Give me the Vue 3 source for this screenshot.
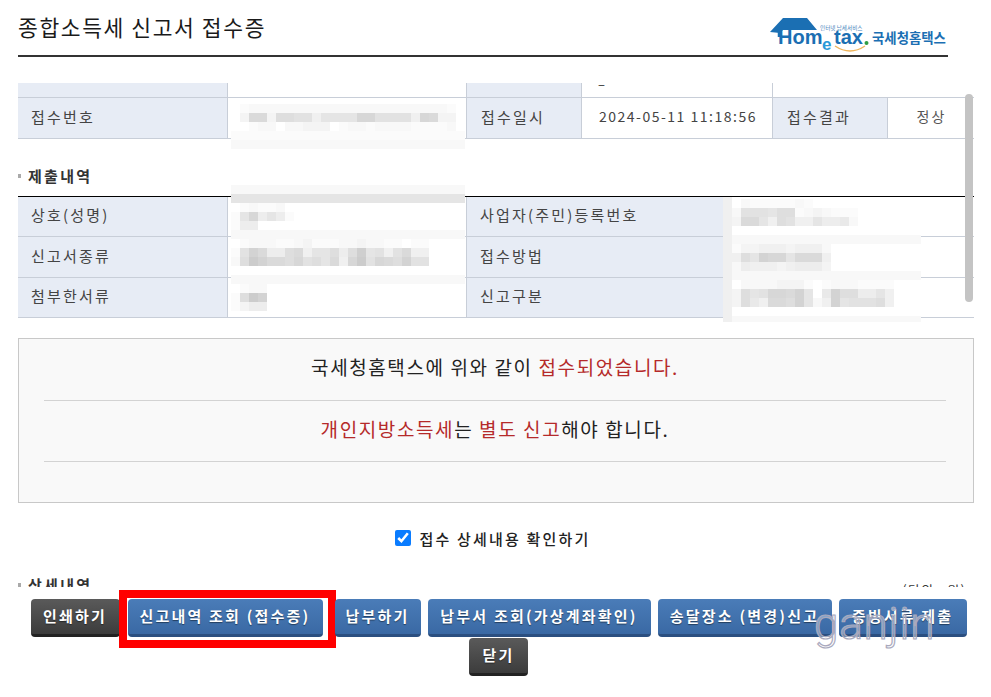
<script setup>
const rows1 = ['접수번호', '접수일시', '2024-05-11 11:18:56', '접수결과', '정상']
const rows2 = [
  { a: '상호(성명)', b: '사업자(주민)등록번호', tall: false },
  { a: '신고서종류', b: '접수방법', tall: true },
  { a: '첨부한서류', b: '신고구분', tall: false }
]
const buttons = [
  { label: '인쇄하기', cls: 'dark w1' },
  { label: '신고내역 조회 (접수증)', cls: 'blue w2 marked' },
  { label: '납부하기', cls: 'blue w3' },
  { label: '납부서 조회(가상계좌확인)', cls: 'blue w4' },
  { label: '송달장소 (변경)신고', cls: 'blue w5' },
  { label: '증빙서류 제출', cls: 'blue w6' },
  { label: '닫기', cls: 'dark w7' }
]
const band = (x, y, w, h, d) => ({ x, y, w, h, r: [d] })
const cells = (x, y, r) => {
  const n = Math.max(...r.map((s) => s.length))
  const rows = r.map((s) => s.padEnd(n, 'f'))
  return { x, y, w: n * 9, h: rows.length * 9, r: rows }
}
const raw = [
  band(231, 131, 234, 9, 'e'),
  band(231, 140, 234, 9, 'd'),
  cells(240, 104, ['edddddddddddddddddddddde', 'c55c6677b88884477 7b45cc'.replace(' ', '7'), 'feddfddcccfeddeddddeeeed']),
  band(231, 185, 234, 9, 'd'),
  band(231, 194, 234, 9, '8'),
  cells(231, 203, ['fedeed', 'e84a8ae', 'eaa']),
  band(231, 230, 234, 9, 'd'),
  cells(231, 239, ['fedddeedceeeddcddeefee', 'e735aa65b886a6287b75bb', 'd61355647685b417456377']),
  band(231, 275, 234, 9, 'd'),
  cells(231, 284, ['fedd', 'e613', 'ecaa']),
  band(723, 197, 9, 125, 'b'),
  band(732, 197, 189, 125, 'f'),
  cells(732, 199, [
    'fdeeeeedef',
    'd777866edcdeee',
    'c558b67bb8aa9d',
    'f',
    'ddddddddddddddddddddd',
    'eccbbbcbbbd',
    'b683448555b',
    'dabbbcbaaac',
    'ddddddddddddddddddddd',
    'fddddcccefedddeeee',
    'c68744538f9366aa8b',
    'c69b55638db38777 6b'.replace(' ', '')
  ]),
  band(732, 316, 189, 6, 'd')
]
const tone = (d) => {
  const v = Math.round(200 + (parseInt(d, 16) * 55) / 15)
  return `rgb(${v},${v},${v})`
}
const patches = raw.map((p, i) => ({
  id: i,
  style: {
    left: p.x + 'px',
    top: p.y + 'px',
    width: p.w + 'px',
    height: p.h + 'px',
    gridTemplateColumns: `repeat(${p.r[0].length}, 1fr)`
  },
  cells: p.r.join('').split('').map(tone)
}))
</script>

<template>
  <div class="page">
    <header class="head">
      <h1 class="title">종합소득세 신고서 접수증</h1>
      <svg class="logo" width="178" height="40" viewBox="0 0 178 40">
        <path d="M0 17 L13 3 H37 L47 15 H13 L10 18 Z" fill="#1b6fb3" />
        <path d="M9 17 V22" stroke="#1b6fb3" stroke-width="2.5" />
        <text x="8" y="29" class="lg-main">Hom</text>
        <text x="52" y="35" class="lg-e">e</text>
        <text x="64" y="29" class="lg-main">tax</text>
        <circle cx="96.5" cy="28" r="2" fill="#2f9e44" />
        <path d="M65 31 Q80 41 95 31" fill="none" stroke="#efb45a" stroke-width="1.5" />
        <text x="50" y="15" class="lg-small">인터넷 납세서비스</text>
        <text x="102" y="28" class="lg-ko">국세청홈택스</text>
      </svg>
    </header>

    <main class="content">
      <div class="grid top">
        <div class="th stub"></div>
        <div class="td stub"></div>
        <div class="th stub"></div>
        <div class="td stub dash">–</div>
        <div class="stub wide"></div>
        <div class="th">{{ rows1[0] }}</div>
        <div class="td"></div>
        <div class="th shift">{{ rows1[1] }}</div>
        <div class="td date">{{ rows1[2] }}</div>
        <div class="th shift">{{ rows1[3] }}</div>
        <div class="td center">{{ rows1[4] }}</div>
      </div>

      <h2 class="section"><i class="dot"></i>제출내역</h2>
      <div class="grid lower">
        <template v-for="r in rows2" :key="r.a">
          <div class="th" :class="{ tall: r.tall }">{{ r.a }}</div>
          <div class="td" :class="{ tall: r.tall }"></div>
          <div class="th" :class="{ tall: r.tall }">{{ r.b }}</div>
          <div class="td" :class="{ tall: r.tall }"></div>
        </template>
      </div>

      <section class="notice">
        <p class="line first">국세청홈택스에 위와 같이 <em>접수되었습니다.</em></p>
        <p class="line">
          <em>개인지방소득세</em>는 <em>별도 신고</em>해야 합니다.
        </p>
        <p class="line empty"></p>
      </section>

      <label class="confirm">
        <input type="checkbox" checked />
        <span>접수 상세내용 확인하기</span>
      </label>

      <div class="detail">
        <h2 class="section flat"><i class="dot"></i>상세내역</h2>
        <span class="unit">(단위 : 원)</span>
      </div>
    </main>

    <div
      v-for="p in patches"
      :key="p.id"
      class="patch"
      :style="p.style"
    >
      <i v-for="(c, n) in p.cells" :key="n" :style="{ background: c }"></i>
    </div>

    <div class="scrollbar"></div>

    <footer class="actions">
      <button v-for="b in buttons" :key="b.label" type="button" class="btn" :class="b.cls">
        {{ b.label }}
      </button>
    </footer>

    <div class="mark">ganjin</div>
  </div>
</template>

<style>
html,
body {
  margin: 0;
  background: #fff;
}
</style>

<style scoped>
.page {
  position: relative;
  width: 991px;
  height: 697px;
  overflow: hidden;
  background: #fff;
  font-family: "Noto Sans CJK KR", "Noto Sans", sans-serif;
  color: #333;
}
.head {
  display: flex;
  justify-content: space-between;
  align-items: flex-end;
  width: 930px;
  height: 55px;
  margin-left: 18px;
  border-bottom: 2px solid #333;
}
.title {
  margin: 0 0 13px;
  font-size: 21.5px;
  font-weight: 400;
  line-height: 30px;
  letter-spacing: 1.6px;
  color: #1a1a1a;
}
.logo {
  display: block;
  flex: none;
}
.lg-main {
  font: 700 20px "Liberation Sans", sans-serif;
  fill: #1b6fb3;
}
.lg-e {
  font: 700 17px "Liberation Sans", sans-serif;
  fill: #2a9ad8;
}
.lg-small {
  font: 400 5.6px "Noto Sans CJK KR", sans-serif;
  fill: #4b86bd;
}
.lg-ko {
  font: 700 13.4px "Noto Sans CJK KR", sans-serif;
  fill: #1b6fb3;
}
.content {
  width: 956px;
  margin: 26px 0 0 18px;
}
.grid {
  display: grid;
  font-size: 15px;
  letter-spacing: 2.2px;
}
.top {
  grid-template-columns: 210px 239px 115px 191px 115px 86px;
  grid-template-rows: 15px 41px;
}
.lower {
  grid-template-columns: 210px 239px 257px 250px;
  grid-template-rows: 40px 41px 40px;
  border-top: 1px solid #000;
}
.th,
.td {
  display: flex;
  align-items: center;
  box-sizing: border-box;
  border-bottom: 1px solid #c8ced8;
  border-right: 1px solid #c8ced8;
}
.th {
  padding-left: 13px;
  padding-bottom: 4px;
  background: #e7ecf5;
  color: #444;
}
.th.shift {
  padding-left: 14px;
}
.td {
  background: #fff;
}
.td:last-child,
.lower .td {
  border-right: 0;
}
.lower .td:nth-child(4n + 2) {
  border-right: 1px solid #c8ced8;
}
.wide {
  grid-column: 5 / 7;
  border-bottom: 1px solid #c8ced8;
}
.dash {
  padding-left: 16px;
  align-items: flex-start;
  font-size: 13px;
  line-height: 2px;
  letter-spacing: 0;
  color: #333;
}
.date {
  padding-left: 17px;
  padding-bottom: 4px;
  font-size: 14px;
  letter-spacing: 1.5px;
  color: #444;
}
.center {
  justify-content: center;
  padding-left: 1px;
  padding-bottom: 4px;
  color: #555;
  font-size: 14px;
}
.section {
  display: flex;
  align-items: center;
  gap: 7px;
  height: 57px;
  margin: 0;
  padding-top: 17px;
  box-sizing: border-box;
  font-size: 15px;
  font-weight: 700;
  letter-spacing: 2.3px;
  color: #333;
  line-height: 20px;
}
.flat {
  padding-top: 0;
  height: 20px;
}
.dot {
  width: 3px;
  height: 4px;
  background: #aaa;
}
.notice {
  display: flex;
  flex-direction: column;
  box-sizing: border-box;
  height: 165px;
  margin-top: 20px;
  padding: 0 27px 0 25px;
  border: 1px solid #c8c8c8;
  background: #f9f9f9;
}
.line {
  display: block;
  flex: none;
  box-sizing: border-box;
  height: 61px;
  margin: 0;
  border-bottom: 1px solid #d3d3d3;
  font-size: 19px;
  letter-spacing: 1.6px;
  line-height: 56px;
  text-align: center;
  color: #222;
}
.line.first {
  height: 62px;
}
.line.empty {
  flex: 1;
  height: auto;
  border-bottom: 0;
}
.line em {
  font-style: normal;
  color: #b52a2a;
}
.confirm {
  display: flex;
  justify-content: center;
  align-items: center;
  gap: 8px;
  height: 30px;
  margin-top: 20px;
  padding-right: 6px;
  font-size: 15px;
  font-weight: 500;
  letter-spacing: 2.2px;
  color: #222;
}
.confirm input {
  width: 16px;
  height: 16px;
  margin: 0;
  accent-color: #0a7cff;
}
.detail {
  display: flex;
  justify-content: space-between;
  align-items: flex-start;
  height: 20px;
  margin-top: 22px;
  padding-right: 8px;
}
.unit {
  margin-top: 5px;
  font-size: 13px;
  letter-spacing: 1.2px;
  color: #333;
}
.patch {
  position: absolute;
  display: grid;
  grid-auto-rows: 1fr;
}
.patch i {
  display: block;
}
.scrollbar {
  position: absolute;
  left: 965px;
  top: 94px;
  width: 8px;
  height: 208px;
  border-radius: 4px;
  background: #c4c4c4;
}
.actions {
  position: absolute;
  left: 0;
  right: 0;
  top: 587px;
  height: 110px;
  box-sizing: border-box;
  padding: 12px 0 0 6px;
  background: #fff;
  display: flex;
  flex-wrap: wrap;
  justify-content: center;
  align-content: flex-start;
  column-gap: 7px;
  row-gap: 1px;
}
.btn {
  position: relative;
  box-sizing: border-box;
  height: 38px;
  padding: 0 0 2px;
  border: 0;
  border-radius: 4px;
  font-family: inherit;
  font-size: 15px;
  font-weight: 700;
  letter-spacing: 2.2px;
  color: #fff;
  white-space: nowrap;
  text-shadow: 0 1px 1px rgba(0, 0, 0, 0.45);
}
.blue {
  background: linear-gradient(#4a7cb8, #3a69a4);
  border-bottom: 3px solid #2b4f80;
}
.dark {
  background: linear-gradient(#5a5a5a, #3c3c3c);
  border-bottom: 3px solid #222;
}
.w1 { width: 89px; }
.w2 { width: 195px; margin-left: 1px; margin-right: 5px; }
.w3 { width: 86px; }
.w4 { width: 223px; }
.w5 { width: 174px; }
.w6 { width: 128px; }
.w7 { width: 59px; }
.marked::after {
  content: "";
  position: absolute;
  left: -9px;
  top: -9px;
  width: 217px;
  height: 58px;
  box-sizing: border-box;
  border: 8px solid #f00;
}
.mark {
  position: absolute;
  left: 814px;
  top: 597px;
  font-family: "Roboto", sans-serif;
  font-size: 44px;
  font-weight: 300;
  letter-spacing: 0.8px;
  line-height: 54px;
  color: rgba(255, 255, 255, 0.35);
  -webkit-text-stroke: 1.2px #a9a9bd;
}
</style>
